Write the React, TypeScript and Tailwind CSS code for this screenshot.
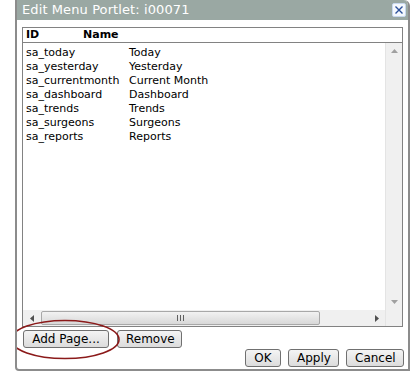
import type { FC } from 'react'

const rows: [string, string][] = [
  ['sa_today', 'Today'],
  ['sa_yesterday', 'Yesterday'],
  ['sa_currentmonth', 'Current Month'],
  ['sa_dashboard', 'Dashboard'],
  ['sa_trends', 'Trends'],
  ['sa_surgeons', 'Surgeons'],
  ['sa_reports', 'Reports'],
]

const Btn: FC<{ label: string; className?: string }> = ({ label, className = '' }) => (
  <button
    type="button"
    className={`h-[18px] rounded-[3px] border border-[#707070] bg-gradient-to-b from-[#f4f4f4] to-[#dcdcdc] px-2 text-[12px] leading-none text-black ${className}`}
  >
    {label}
  </button>
)

export default function App() {
  return (
    <div className="h-[373px] w-[412px] bg-white" style={{ fontFamily: '"DejaVu Sans", Verdana, sans-serif' }}>
      <div className="relative ml-[15px] flex h-[371px] w-[395px] flex-col overflow-hidden rounded-tr-[6px] rounded-bl-[4px] border-2 border-t-0 border-[#8c8c8c] bg-white">
        <div className="flex h-[20px] shrink-0 items-center justify-between bg-[#9aa8a3] pl-[5px] pr-[2px]">
          <span className="text-[13px] tracking-[0.1px] text-white">Edit Menu Portlet: i00071</span>
          <span className="flex h-[14px] w-[14px] items-center justify-center rounded-[2px] border border-[#c8d8ee] bg-[#f4f8fd]">
            <svg width="10" height="10" viewBox="0 0 10 10">
              <path d="M1.5 1.5 L8.5 8.5 M8.5 1.5 L1.5 8.5" stroke="#2a4f9a" strokeWidth="1.4" />
            </svg>
          </span>
        </div>

        <div className="mx-[5px] mt-[7px] flex h-[300px] flex-col border border-[#828282]" style={{ fontFamily: 'Tahoma, "DejaVu Sans", sans-serif' }}>
          <div className="flex h-[15px] shrink-0 items-center border-b border-[#828282] pt-[1px] pl-[3px] text-[11px] font-bold text-black">
            <span className="w-[57px]">ID</span>
            <span>Name</span>
          </div>
          <div className="flex min-h-0 flex-1">
            <div className="flex min-w-0 flex-1 flex-col">
              <div className="flex-1 pt-[3px] pl-[3px]">
                {rows.map(([id, name]) => (
                  <div key={id} className="flex h-[14px] items-center text-[11px] text-black">
                    <span className="w-[103px] shrink-0">{id}</span>
                    <span>{name}</span>
                  </div>
                ))}
              </div>
              <div className="flex h-[16px] shrink-0 items-center bg-[#f0f0f0]">
                <span className="flex w-[18px] justify-center">
                  <svg width="4" height="7" viewBox="0 0 4 7"><path d="M4 0 L0 3.5 L4 7 Z" fill="#505050" /></svg>
                </span>
                <div className="relative flex h-[14px] w-[279px] items-center justify-center rounded-[2px] border border-[#a8a8a8] bg-gradient-to-b from-[#f2f2f2] to-[#d8d8d8]">
                  <svg width="7" height="6" viewBox="0 0 7 6">
                    <path d="M0.5 0 V6 M3.5 0 V6 M6.5 0 V6" stroke="#606060" strokeWidth="1" />
                  </svg>
                </div>
                <div className="flex-1" />
                <span className="flex w-[17px] justify-center">
                  <svg width="4" height="7" viewBox="0 0 4 7"><path d="M0 0 L4 3.5 L0 7 Z" fill="#505050" /></svg>
                </span>
              </div>
            </div>
            <div className="flex w-[17px] shrink-0 flex-col items-center justify-between border-l border-[#e4e4e4] bg-[#f0f0f0] pt-[6px] pb-[22px]">
              <svg width="7" height="4" viewBox="0 0 7 4"><path d="M0 4 L3.5 0 L7 4 Z" fill="#a0a0a0" /></svg>
              <svg width="7" height="4" viewBox="0 0 7 4"><path d="M0 0 L3.5 4 L7 0 Z" fill="#a0a0a0" /></svg>
            </div>
          </div>
        </div>

        <div className="mx-[6px] mt-[3px] flex gap-[8px]" style={{ fontFamily: 'Tahoma, "DejaVu Sans", sans-serif' }}>
          <Btn label="Add Page..." className="w-[86px]" />
          <Btn label="Remove" className="w-[65px]" />
        </div>
        <div className="mr-[4px] mt-[1px] flex justify-end gap-[7px]" style={{ fontFamily: 'Tahoma, "DejaVu Sans", sans-serif' }}>
          <Btn label="OK" className="w-[36px]" />
          <Btn label="Apply" className="w-[51px]" />
          <Btn label="Cancel" className="w-[58px]" />
        </div>

        <svg className="absolute left-[-8px] top-[319px]" width="114" height="41" viewBox="0 0 114 41">
          <ellipse cx="56" cy="20.5" rx="54" ry="19" fill="none" stroke="#8b1a1a" strokeWidth="1.6" />
        </svg>
      </div>
    </div>
  )
}
